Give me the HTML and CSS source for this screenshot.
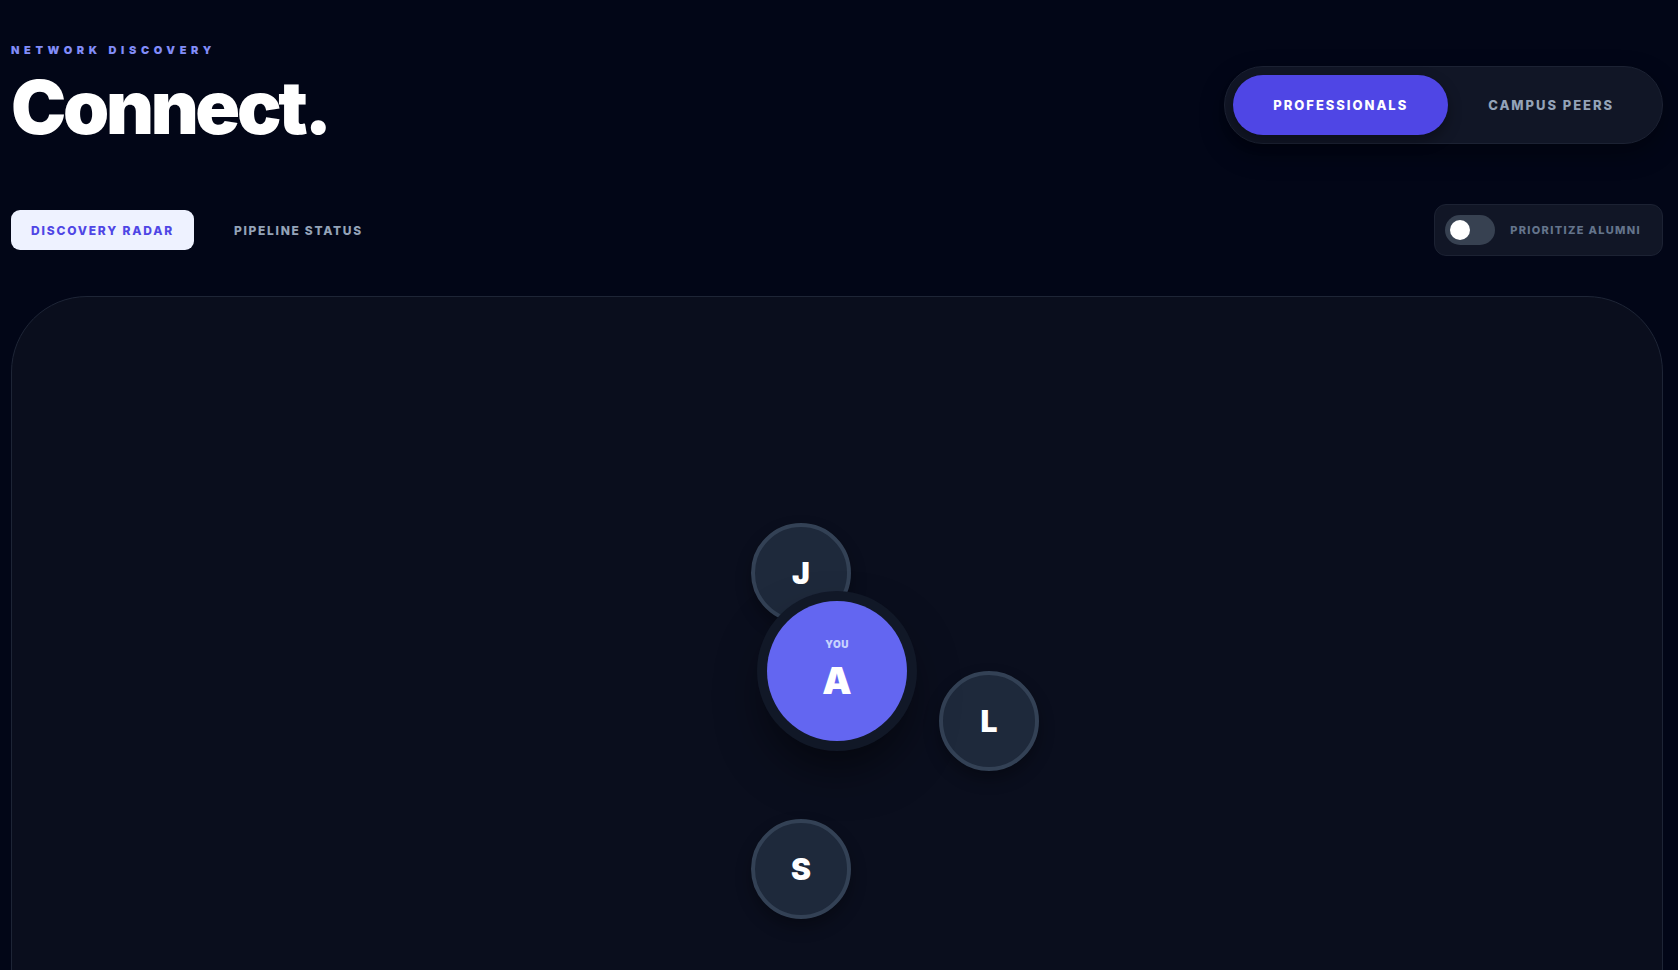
FILE: index.html
```html
<!DOCTYPE html>
<html lang="en">

<head>
	<meta charset="UTF-8" />
	<meta name="viewport" content="width=device-width, initial-scale=1.0" />
	<title>Connect</title>
	<link rel="stylesheet" href="styles.css">
</head>

<body>
	<header class="top-bar">
		<div class="title-block">
			<div class="eyebrow">Network Discovery</div>
			<h1 class="page-title">Connect.</h1>
		</div>
		<div class="segment">
			<button class="segment-button active">Professionals</button>
			<button class="segment-button">Campus Peers</button>
		</div>
	</header>

	<div class="tool-row">
		<nav class="tabs">
			<button class="tab active">Discovery Radar</button>
			<button class="tab">Pipeline Status</button>
		</nav>
		<label class="alumni-toggle">
			<span class="switch"><span class="knob"></span></span>
			<span class="toggle-label">Prioritize Alumni</span>
		</label>
	</div>

	<main class="radar">
		<div class="node" id="nodeJ">J</div>
		<div class="node" id="nodeL">L</div>
		<div class="node" id="nodeS">S</div>
		<div class="me">
			<div class="me-inner">
				<span class="me-tag">You</span>
				<span class="me-letter">A</span>
			</div>
		</div>
	</main>
</body>

</html>
```

FILE: styles.css
```css
* {
	box-sizing: border-box;
}

html,
body {
	height: 100%;
	overflow: hidden;
}

body {
	margin: 0;
	padding: 42px 15px 0 11px;
	background-color: #020617;
	font-family: Inter, "Noto Sans", sans-serif;
	color: #ffffff;
}

button {
	font-family: inherit;
	border: none;
	background: none;
	cursor: pointer;
}

.top-bar {
	display: flex;
	justify-content: space-between;
	align-items: flex-end;
}

.eyebrow {
	font-size: 11px;
	line-height: 16px;
	font-weight: 900;
	letter-spacing: 0.42em;
	text-transform: uppercase;
	color: #818cf8;
	margin-bottom: 12px;
}

.page-title {
	margin: 0;
	font-size: 74px;
	line-height: 74px;
	font-weight: 900;
	letter-spacing: -0.045em;
}

.segment {
	display: flex;
	padding: 8px;
	background-color: #111626;
	border: 1px solid #1c2233;
	border-radius: 40px;
	box-shadow: 0 10px 24px rgba(0, 0, 0, 0.35);
}

.segment-button {
	height: 60px;
	padding: 0 40px;
	border-radius: 30px;
	font-size: 13px;
	font-weight: 800;
	letter-spacing: 0.15em;
	text-transform: uppercase;
	color: #94a3b8;
}

.segment-button.active {
	background-color: #4f46e5;
	color: #ffffff;
	box-shadow: 0 6px 14px rgba(0, 0, 0, 0.35);
}

.tool-row {
	display: flex;
	justify-content: space-between;
	align-items: center;
	margin-top: 60px;
}

.tabs {
	display: flex;
	gap: 20px;
}

.tab {
	height: 40px;
	padding: 0 20px;
	border-radius: 9px;
	font-size: 12px;
	font-weight: 800;
	letter-spacing: 0.14em;
	text-transform: uppercase;
	color: #94a3b8;
}

.tab.active {
	background-color: #eef2ff;
	color: #4f46e5;
	letter-spacing: 0.15em;
}

.alumni-toggle {
	display: flex;
	align-items: center;
	gap: 15px;
	height: 52px;
	padding: 0 21px 0 10px;
	background-color: #111626;
	border: 1px solid #1c2233;
	border-radius: 12px;
}

.switch {
	display: flex;
	align-items: center;
	width: 50px;
	height: 30px;
	padding: 0 5px;
	border-radius: 15px;
	background-color: #374151;
}

.knob {
	width: 20px;
	height: 20px;
	border-radius: 50%;
	background-color: #ffffff;
}

.toggle-label {
	font-size: 11px;
	font-weight: 800;
	letter-spacing: 0.12em;
	text-transform: uppercase;
	color: #64748b;
}

.radar {
	position: relative;
	height: 750px;
	margin-top: 40px;
	background-color: #0a0e1d;
	border: 1px solid #1e2536;
	border-radius: 76px;
}

.node {
	position: absolute;
	width: 100px;
	height: 100px;
	transform: translate(-50%, -50%);
	display: flex;
	align-items: center;
	justify-content: center;
	border-radius: 50%;
	background-color: #1e293b;
	border: 4px solid #334155;
	font-size: 30px;
	font-weight: 900;
	box-shadow: 0 8px 16px rgba(0, 0, 0, 0.3);
}

#nodeJ {
	left: calc(50% - 36px);
	top: calc(50% - 98px);
}

#nodeL {
	left: calc(50% + 152px);
	top: calc(50% + 50px);
}

#nodeS {
	left: calc(50% - 36px);
	top: calc(50% + 198px);
}

.me {
	position: absolute;
	left: 50%;
	top: 50%;
	width: 160px;
	height: 160px;
	transform: translate(-50%, -50%);
	padding: 10px;
	border-radius: 50%;
	background-color: #111827;
	box-shadow: 0 25px 50px -12px rgba(0, 0, 0, 0.6);
}

.me-inner {
	width: 100%;
	height: 100%;
	border-radius: 50%;
	background-color: #6366f1;
	display: flex;
	flex-direction: column;
	align-items: center;
	justify-content: center;
}

.me-tag {
	font-size: 10px;
	line-height: 12px;
	font-weight: 900;
	letter-spacing: 0.05em;
	text-transform: uppercase;
	color: #c7d2fe;
	margin-top: -6px;
	margin-bottom: 12px;
}

.me-letter {
	font-size: 37px;
	line-height: 37px;
	font-weight: 900;
}
```
